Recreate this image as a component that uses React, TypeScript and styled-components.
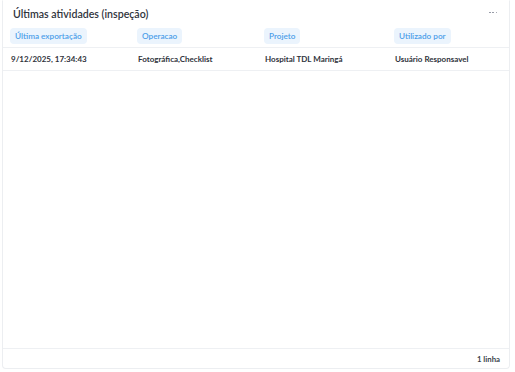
import * as React from "react";
import styled, { createGlobalStyle } from "styled-components";

const GlobalStyle = createGlobalStyle`
  html, body {
    margin: 0;
    padding: 0;
    background: #ffffff;
    font-family: Lato, "Liberation Sans", sans-serif;
    -webkit-font-smoothing: antialiased;
  }
`;

const Page = styled.div`
  width: 515px;
  height: 372px;
  padding: 0 5px 3px 2px;
  box-sizing: border-box;
`;

const Card = styled.section`
  height: 369px;
  box-sizing: border-box;
  border: 1px solid #eceef1;
  border-top-color: transparent;
  border-radius: 0 0 4px 4px;
  display: flex;
  flex-direction: column;
  background: #fff;
`;

const Header = styled.header`
  height: 23px;
  display: flex;
  align-items: center;
  justify-content: space-between;
  padding: 2px 12px 0 10px;
  box-sizing: border-box;
`;

const Title = styled.h2`
  margin: 0;
  font-size: 10.6px;
  font-weight: 600;
  color: #30343c;
`;

const MenuDots = styled.button`
  border: 0;
  background: none;
  padding: 0;
  width: 8px;
  height: 8px;
  display: flex;
  align-items: center;
  justify-content: space-between;
  cursor: pointer;
  margin-top: -2px;
`;

const Dot = styled.span`
  width: 1.5px;
  height: 1.5px;
  border-radius: 50%;
  background: #8a8f9c;
`;

const Row = styled.div<{ $head?: boolean }>`
  display: grid;
  grid-template-columns: 127px 127px 130px 1fr;
  align-items: center;
  height: ${p => (p.$head ? 23 : 22)}px;
  padding-left: 7px;
  border-bottom: 1px solid #eef0f3;
`;

const Chip = styled.span`
  justify-self: start;
  display: inline-flex;
  align-items: center;
  height: 16px;
  padding: 0 5px;
  border-radius: 4px;
  background: #ebf4fd;
  color: #4b9ee9;
  font-size: 8.2px;
  font-weight: 600;
`;

const Cell = styled.span`
  font-size: 8px;
  font-weight: 700;
  color: #2f333b;
  white-space: nowrap;
  padding-left: 1px;
`;

const Body = styled.div`
  flex: 1;
`;

const Footer = styled.footer`
  height: 19px;
  border-top: 1px solid #eef0f3;
  display: flex;
  align-items: center;
  justify-content: flex-end;
  padding-right: 9px;
  font-size: 7.8px;
  font-weight: 700;
  color: #3a3f4a;
`;

const columns = ["Última exportação", "Operacao", "Projeto", "Utilizado por"];

const rows = [
  ["9/12/2025, 17:34:43", "Fotográfica,Checklist", "Hospital TDL Maringá", "Usuário Responsavel"],
];

export default function App() {
  return (
    <>
      <GlobalStyle />
      <Page>
        <Card>
          <Header>
            <Title>Últimas atividades (inspeção)</Title>
            <MenuDots aria-label="Mais opções">
              <Dot />
              <Dot />
              <Dot />
            </MenuDots>
          </Header>
          <Row $head>
            {columns.map(c => (
              <Chip key={c}>{c}</Chip>
            ))}
          </Row>
          <Body>
            {rows.map((r, i) => (
              <Row key={i}>
                {r.map((v, j) => (
                  <Cell key={j}>{v}</Cell>
                ))}
              </Row>
            ))}
          </Body>
          <Footer>1 linha</Footer>
        </Card>
      </Page>
    </>
  );
}
